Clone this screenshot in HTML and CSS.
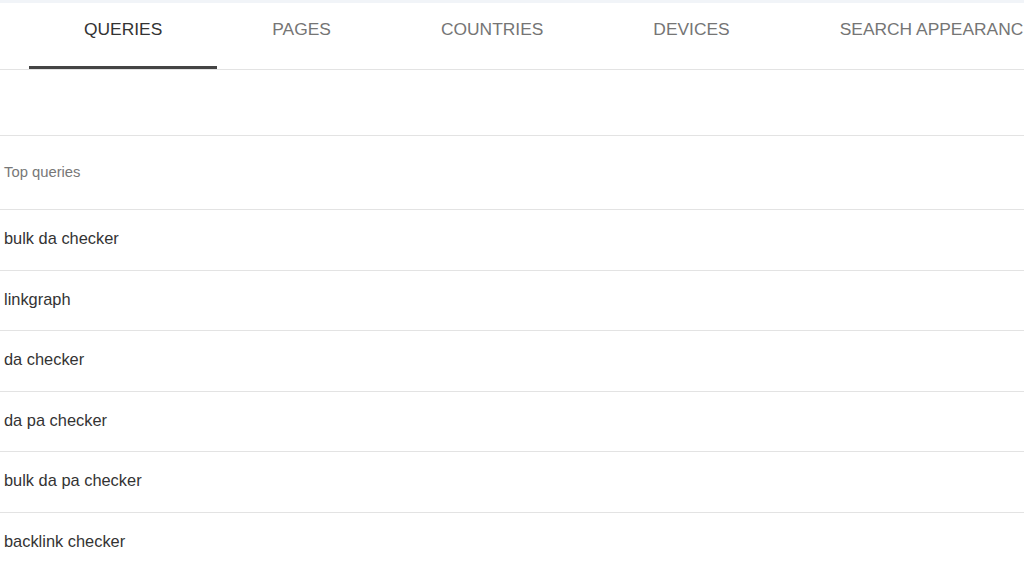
FILE: index.html
```html
<!DOCTYPE html>
<html lang="en">
<head>
<meta charset="utf-8">
<title>Performance - Queries</title>
<link rel="stylesheet" href="styles.css">
</head>
<body>
<div class="top-strip"></div>
<nav class="tabs">
  <div class="tab active">QUERIES</div>
  <div class="tab">PAGES</div>
  <div class="tab">COUNTRIES</div>
  <div class="tab">DEVICES</div>
  <div class="tab">SEARCH APPEARANCE</div>
</nav>
<div class="spacer"></div>
<div class="table">
  <div class="head-row">Top queries</div>
  <div class="row">bulk da checker</div>
  <div class="row">linkgraph</div>
  <div class="row">da checker</div>
  <div class="row">da pa checker</div>
  <div class="row">bulk da pa checker</div>
  <div class="row">backlink checker</div>
</div>
</body>
</html>
```

FILE: styles.css
```css
html, body {
  margin: 0;
  padding: 0;
  background: #ffffff;
  overflow: hidden;
}
body {
  width: 1024px;
  height: 561px;
  font-family: "Liberation Sans", Arial, sans-serif;
  color: #333333;
}
.top-strip {
  height: 3px;
  background: #f1f4f8;
}
.tabs {
  display: flex;
  height: 66px;
  padding-left: 29px;
  border-bottom: 1px solid #e3e3e3;
  white-space: nowrap;
  overflow: hidden;
}
.tab {
  flex: none;
  padding: 16px 55px 0;
  box-sizing: border-box;
  height: 66px;
  font-size: 17.4px;
  color: #757575;
  border-bottom: 3px solid transparent;
}
.tab.active {
  color: #333333;
  border-bottom-color: #444444;
}
.spacer {
  height: 65px;
  border-bottom: 1px solid #e3e3e3;
}
.head-row {
  height: 74px;
  box-sizing: border-box;
  display: flex;
  align-items: center;
  padding-left: 4px;
  padding-bottom: 2px;
  font-size: 14.8px;
  color: #777777;
  border-bottom: 1px solid #e3e3e3;
}
.row {
  height: 57.5px;
  box-sizing: content-box;
  display: flex;
  align-items: center;
  padding-left: 4px;
  padding-bottom: 2px;
  font-size: 16.4px;
  color: #333333;
  border-bottom: 1px solid #e3e3e3;
}
```
